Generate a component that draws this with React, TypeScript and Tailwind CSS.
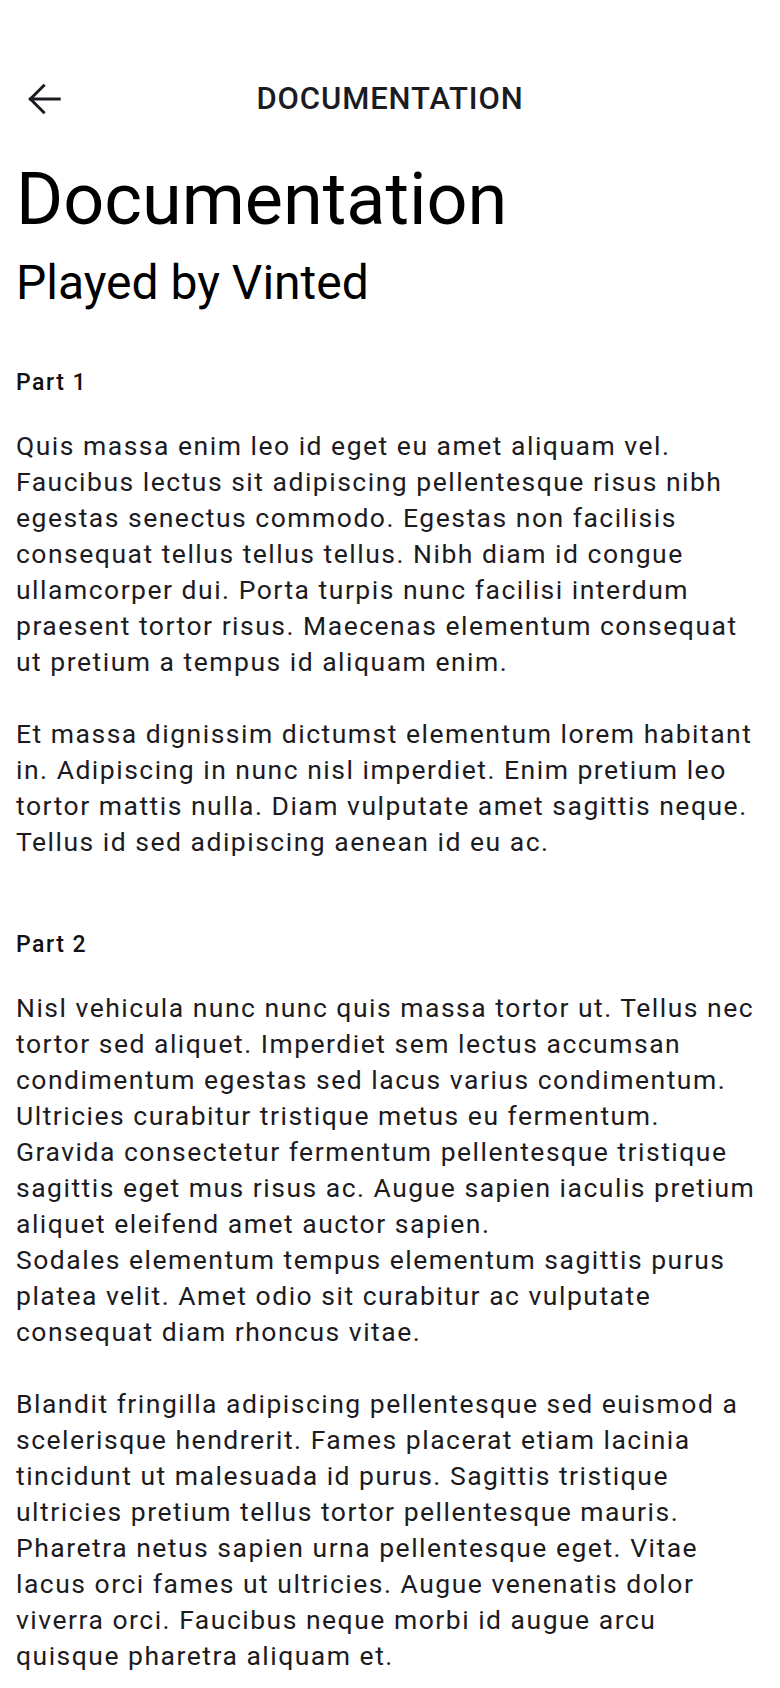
import React from 'react'

function BackArrow() {
  return (
    <svg width="48" height="48" viewBox="0 0 24 24" fill="none" stroke="#1c1b1f" strokeWidth="1.5" strokeLinecap="square">
      <path d="M19.6 12H5.2" />
      <path d="M11.8 5.4 5.2 12l6.6 6.6" />
    </svg>
  )
}

function Section({ title, children, className = '' }: { title: string; children: React.ReactNode; className?: string }) {
  return (
    <section className={className}>
      <h3 className="text-[23px] leading-[26px] font-medium tracking-[1.5px] text-[#111111]">{title}</h3>
      <div className="mt-[32px] flex flex-col gap-[36px] text-[26.5px] leading-[36px] tracking-[1.5px] text-[#1c1b1f]">
        {children}
      </div>
    </section>
  )
}

export default function App() {
  return (
    <div className="min-h-screen bg-white font-['Roboto',sans-serif]">
      <header className="mt-[57px] h-[84px] grid grid-cols-[1fr_auto_1fr] items-center">
        <div className="pl-[20px] flex items-center">
          <BackArrow />
        </div>
        <span className="text-[31px] font-medium tracking-[0.9px] text-[#1c1b1f] uppercase">Documentation</span>
        <div />
      </header>

      <main className="px-4 pb-4">
        <h1 className="mt-[17px] text-[72px] leading-[84px] font-normal text-black">Documentation</h1>
        <h2 className="mt-[14px] text-[48px] leading-[54px] font-normal text-black">Played by Vinted</h2>

        <Section title="Part 1" className="mt-[60px]">
          <p>
            Quis massa enim leo id eget eu amet aliquam vel. Faucibus lectus sit adipiscing pellentesque risus nibh
            egestas senectus commodo. Egestas non facilisis consequat tellus tellus tellus. Nibh diam id congue
            ullamcorper dui. Porta turpis nunc facilisi interdum praesent tortor risus. Maecenas elementum consequat ut
            pretium a tempus id aliquam enim.
          </p>
          <p>
            Et massa dignissim dictumst elementum lorem habitant in. Adipiscing in nunc nisl imperdiet. Enim pretium leo
            tortor mattis nulla. Diam vulputate amet sagittis neque. Tellus id sed adipiscing aenean id eu ac.
          </p>
        </Section>

        <Section title="Part 2" className="mt-[72px]">
          <p>
            Nisl vehicula nunc nunc quis massa tortor ut. Tellus nec tortor sed aliquet. Imperdiet sem lectus accumsan
            condimentum egestas sed lacus varius condimentum. Ultricies curabitur tristique metus eu fermentum. Gravida
            consectetur fermentum pellentesque tristique sagittis eget mus risus ac. Augue sapien iaculis pretium
            aliquet eleifend amet auctor sapien.
            <br />
            Sodales elementum tempus elementum sagittis purus platea velit. Amet odio sit curabitur ac vulputate
            consequat diam rhoncus vitae.
          </p>
          <p>
            Blandit fringilla adipiscing pellentesque sed euismod a scelerisque hendrerit. Fames placerat etiam lacinia
            tincidunt ut malesuada id purus. Sagittis tristique ultricies pretium tellus tortor pellentesque mauris.
            Pharetra netus sapien urna pellentesque eget. Vitae lacus orci fames ut ultricies. Augue venenatis dolor
            viverra orci. Faucibus neque morbi id augue arcu quisque pharetra aliquam et.
          </p>
        </Section>
      </main>
    </div>
  )
}
